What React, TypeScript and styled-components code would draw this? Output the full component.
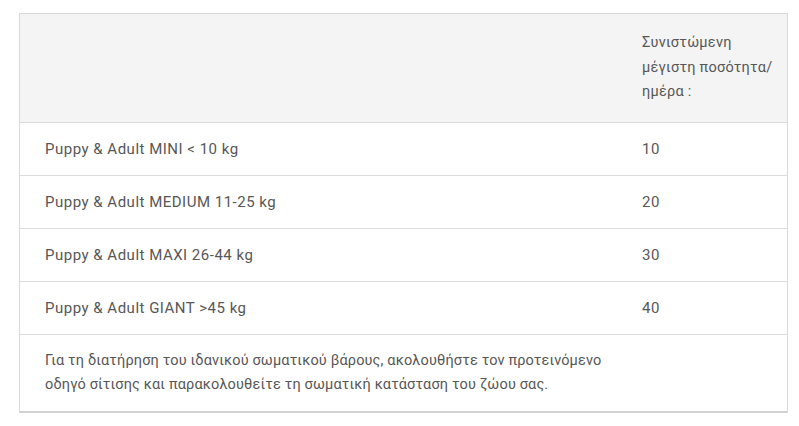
import { FC } from "react";
import styled, { createGlobalStyle } from "styled-components";

const GlobalStyle = createGlobalStyle`
  body {
    margin: 0;
    background: #ffffff;
    font-family: Roboto, "Noto Sans", sans-serif;
  }
`;

const Page = styled.div`
  padding: 13px 13px 15px 19px;
`;

const Card = styled.div`
  width: 767px;
  border: 1px solid #d9d9d9;
  border-bottom: 2px solid #d2d2d2;
  background: #fff;
  color: #575757;
`;

const Row = styled.div<{ $head?: boolean }>`
  display: grid;
  grid-template-columns: 597px 1fr;
  align-items: center;
  height: ${(p) => (p.$head ? "108px" : "52px")};
  background: ${(p) => (p.$head ? "#f4f4f4" : "#fff")};
  border-bottom: 1px solid #dcdcdc;
`;

const Cell = styled.div`
  padding: 0 25px;
  font-size: 15px;
  letter-spacing: 0.5px;
  line-height: 24px;
`;

const HeadCell = styled.div`
  padding: 0 8px 0 25px;
  font-size: 14.5px;
  letter-spacing: 0.25px;
  line-height: 24.5px;
  white-space: nowrap;
`;

const Note = styled.div`
  padding: 14px 25px 14px 25px;
  font-size: 14.5px;
  letter-spacing: 0.15px;
  line-height: 24px;
`;

const rows = [
  ["Puppy & Adult MINI < 10 kg", "10"],
  ["Puppy & Adult MEDIUM 11-25 kg", "20"],
  ["Puppy & Adult MAXI 26-44 kg", "30"],
  ["Puppy & Adult GIANT >45 kg", "40"],
];

const App: FC = () => (
  <>
    <GlobalStyle />
    <Page>
      <Card>
        <Row $head>
          <HeadCell />
          <HeadCell>
            Συνιστώμενη
            <br />
            μέγιστη ποσότητα/
            <br />
            ημέρα :
          </HeadCell>
        </Row>
        {rows.map(([name, value]) => (
          <Row key={name}>
            <Cell>{name}</Cell>
            <Cell>{value}</Cell>
          </Row>
        ))}
        <Note>
          Για τη διατήρηση του ιδανικού σωματικού βάρους, ακολουθήστε τον προτεινόμενο
          <br />
          οδηγό σίτισης και παρακολουθείτε τη σωματική κατάσταση του ζώου σας.
        </Note>
      </Card>
    </Page>
  </>
);

export default App;
